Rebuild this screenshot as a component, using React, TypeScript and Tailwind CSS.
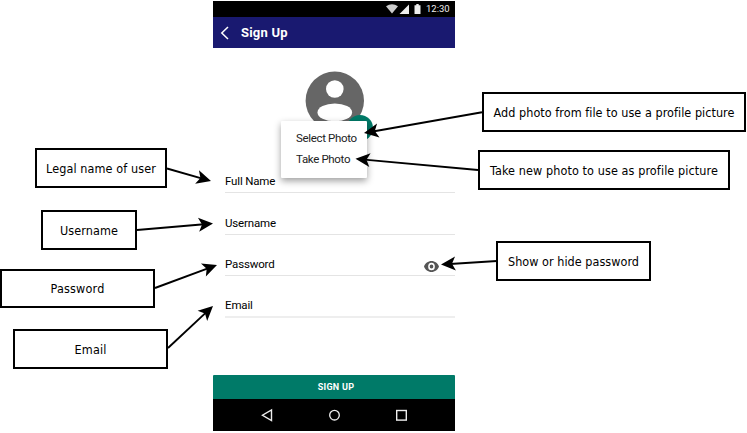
import React from 'react';

type Note = { text: string; box: string; ink: number };

const notes: Note[] = [
  { text: 'Legal name of user', box: 'left-[35px] top-[148px] w-[132px] h-[40px]', ink: 110 },
  { text: 'Username', box: 'left-[41px] top-[210px] w-[96px] h-[40px]', ink: 58 },
  { text: 'Password', box: 'left-[0px] top-[269px] w-[155px] h-[39px]', ink: 54 },
  { text: 'Email', box: 'left-[13px] top-[329px] w-[155px] h-[40px]', ink: 32 },
  { text: 'Add photo from file to use a profile picture', box: 'left-[482px] top-[92px] w-[264px] h-[40px]', ink: 241 },
  { text: 'Take new photo to use as profile picture', box: 'left-[478px] top-[150px] w-[252px] h-[40px]', ink: 228 },
  { text: 'Show or hide password', box: 'left-[496px] top-[241px] w-[155px] h-[40px]', ink: 131 },
];

// Each arrow runs from the edge of a note to the control it describes.
const arrows: [number, number, number, number][] = [
  [167, 168.5, 211, 181],
  [137, 230, 213, 223.5],
  [155, 288, 217, 265],
  [168, 348, 213, 306],
  [497, 261, 441, 264.5],
  [482, 112.3, 364, 133],
  [478, 170, 355.5, 158.8],
];

function Arrow({ p }: { p: [number, number, number, number] }) {
  const [x1, y1, x2, y2] = p;
  const deg = (Math.atan2(y2 - y1, x2 - x1) * 180) / Math.PI;
  const len = Math.hypot(x2 - x1, y2 - y1);
  return (
    <g transform={`translate(${x2} ${y2}) rotate(${deg})`}>
      <line x1={-len} y1="0" x2="-9" y2="0" stroke="#000" strokeWidth="1.9" />
      <path d="M0 0L-14.5 7L-11 0L-14.5 -7Z" />
    </g>
  );
}

function NoteText({ text, ink }: { text: string; ink: number }) {
  const ref = React.useRef<HTMLSpanElement>(null);
  const [spacing, setSpacing] = React.useState(0);
  React.useLayoutEffect(() => {
    if (ref.current) setSpacing((ink - ref.current.getBoundingClientRect().width) / text.length);
  }, [ink, text]);
  return (
    <span ref={ref} className="whitespace-nowrap" style={{ letterSpacing: spacing }}>
      {text}
    </span>
  );
}

function Field({ label, size, children }: { label: string; size: string; children?: React.ReactNode }) {
  return (
    <div className={`ml-3 flex items-start justify-between ${size}`}>
      <span className="text-[11.5px] leading-[14px] tracking-[-0.16px]">{label}</span>
      {children}
    </div>
  );
}

export default function App() {
  return (
    <div className="relative h-[433px] w-[747px] overflow-hidden bg-white text-black">
      <main className="ml-[213px] flex h-[431px] w-[242px] flex-col pt-px font-['Roboto',sans-serif]">
        <div className="flex h-4 shrink-0 items-center justify-end bg-black pr-[5px] text-[#eee]">
          <svg className="h-4 w-[36px]" viewBox="0 0 36 16" fill="#eee">
            <path d="M1 5.2Q7 1.4 13 5.2L7 12.5Z" fill="#ccc" />
            <path d="M24 3.5V13H14.5Z" />
            <path d="M29.500 4.2h1.8V3h2.4v1.2h1.8V13h-6Z" />
          </svg>
          <span className="ml-[5px] w-[24px] whitespace-nowrap text-[9.5px] leading-4">12:30</span>
        </div>
        <header className="flex h-[31px] shrink-0 items-center bg-[#191970] pl-[7px] text-white">
          <svg className="h-[14px] w-[9px]" viewBox="0 0 9 14" fill="none" stroke="#fff" strokeWidth="1.5">
            <path d="M8 1L1.8 7L8 13" />
          </svg>
          <h1 className="ml-[12px] text-[13px] font-bold leading-none tracking-[0.2px]">Sign Up</h1>
        </header>

        <div className="relative h-[125px] shrink-0">
          <svg className="absolute left-[87px] top-[17.500px] h-[70px] w-[70px]" viewBox="0 0 70 70">
            <circle cx="34.800" cy="34.700" r="29.200" fill="#666" />
            <circle cx="34.800" cy="23" r="8.800" fill="#fff" />
            <ellipse cx="34.800" cy="46.400" rx="17.300" ry="8.900" fill="#fff" />
          </svg>
          <div className="absolute left-[134px] top-[67px] h-[26px] w-[26px] rounded-full bg-[#007a68]" />
          <div className="absolute left-[68px] top-[73px] z-10 flex h-[57px] w-[86px] flex-col gap-[7px] rounded-[1px] bg-white pl-[15px] pt-[10px] text-[11.5px] leading-[14px] tracking-[-0.34px] text-[#222] shadow-[0_3px_7px_rgba(0,0,0,0.38)]">
            <span className="whitespace-nowrap">Select Photo</span>
            <span className="whitespace-nowrap">Take Photo</span>
          </div>
        </div>

        <section className="flex h-[202px] shrink-0 flex-col">
          <Field label="Full Name" size="mt-[1px] h-[19px] border-b border-[#e4e4e4]" />
          <Field label="Username" size="mt-[23px] h-[19px] border-b border-[#e4e4e4]" />
          <Field label="Password" size="mt-[22px] h-[19px] border-b border-[#e4e4e4]">
            <svg className="mr-[16px] mt-[4px] h-[11px] w-[15px]" viewBox="1 5.500 22 14" preserveAspectRatio="none" fill="#555">
              <path fillRule="evenodd" d="M12 5.500C7 5.500 2.730 8.400 1 12.500 2.730 16.600 7 19.500 12 19.500s9.270-2.900 11-7C21.270 8.400 17 5.500 12 5.500zM12 17.400a4.900 4.900 0 1 1 0-9.800 4.900 4.900 0 0 1 0 9.800zM12 9.800a2.700 2.700 0 1 0 0 5.400 2.700 2.700 0 0 0 0-5.400z" />
            </svg>
          </Field>
          <Field label="Email" size="mt-[22px] h-[20px] border-b-2 border-[#eee]" />
        </section>

        <button className="mt-auto h-6 shrink-0 rounded-t-[1px] bg-[#007a68] pl-[4px] text-[9px] font-bold leading-6 tracking-[0.25px] text-white">SIGN UP</button>
        <nav className="flex h-8 shrink-0 items-center gap-[53px] bg-black pl-[47px]">
          <svg className="h-[14px] w-[14px]" viewBox="0 0 14 14" fill="none" stroke="#eee" strokeWidth="1.4">
            <path d="M11.500 2V12.500L2.500 7.250Z" />
          </svg>
          <svg className="h-[14px] w-[14px]" viewBox="0 0 14 14" fill="none" stroke="#eee" strokeWidth="1.3">
            <circle cx="7.500" cy="7.200" r="4.800" />
          </svg>
          <svg className="h-[14px] w-[14px]" viewBox="0 0 14 14" fill="none" stroke="#eee" strokeWidth="1.4">
            <rect x="2.700" y="2.500" width="9.600" height="9.600" />
          </svg>
        </nav>
      </main>

      {notes.map((n) => (
        <div key={n.text} className={`absolute flex items-center justify-center border-2 border-black bg-white pt-[1px] font-['DejaVu_Sans_Condensed','DejaVu_Sans',sans-serif] text-[12.5px] leading-4 ${n.box}`}>
          <NoteText text={n.text} ink={n.ink} />
        </div>
      ))}
      <svg className="pointer-events-none absolute inset-0 z-20 h-[433px] w-[747px]" viewBox="0 0 747 433">
        {arrows.map((p) => (
          <Arrow key={p.join()} p={p} />
        ))}
      </svg>
    </div>
  );
}
